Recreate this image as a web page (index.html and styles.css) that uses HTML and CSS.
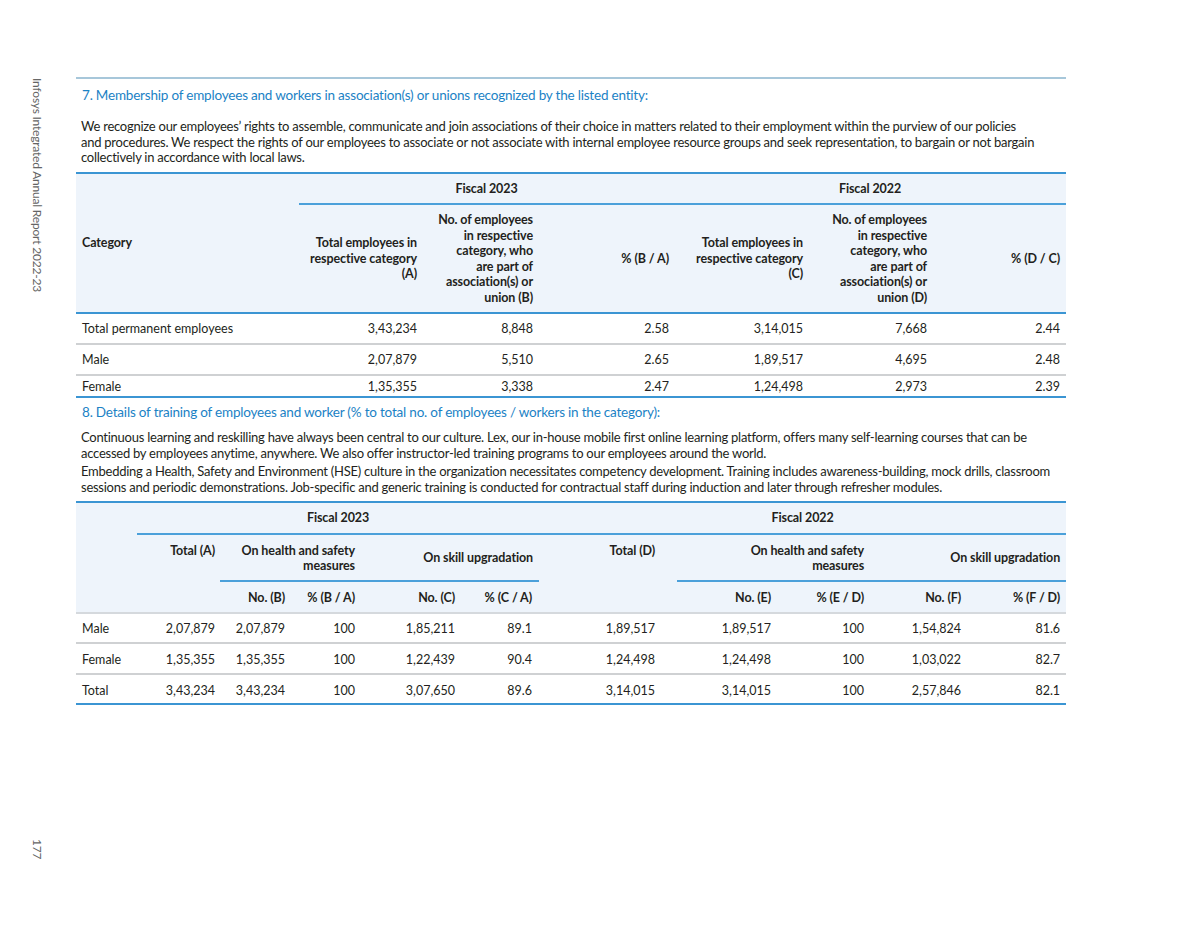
FILE: index.html
```html
<!DOCTYPE html>
<html lang="en">
<head>
<meta charset="utf-8">
<title>Infosys Integrated Annual Report 2022-23 — 177</title>
<link rel="stylesheet" href="styles.css">
</head>
<body>
<div class="page">
  <aside class="side">
    <span class="side-title">Infosys Integrated Annual Report 2022-23</span>
    <span class="side-num">177</span>
  </aside>
  <main class="main">
    <div class="rule"></div>
    <h2 class="sec-title t7">7. Membership of employees and workers in association(s) or unions recognized by the listed entity:</h2>
    <p class="para p-a">We recognize our employees’ rights to assemble, communicate and join associations of their choice in matters related to their employment within the purview of our policies<br>and procedures. We respect the rights of our employees to associate or not associate with internal employee resource groups and seek representation, to bargain or not bargain<br>collectively in accordance with local laws.</p>

    <table class="tbl t1">
      <colgroup>
        <col class="c1-cat"><col class="c1-a"><col class="c1-b"><col class="c1-ba"><col class="c1-c"><col class="c1-d"><col class="c1-dc">
      </colgroup>
      <thead>
        <tr>
          <th rowspan="2" class="cat">Category</th>
          <th colspan="3" class="fiscal">Fiscal 2023</th>
          <th colspan="3" class="fiscal">Fiscal 2022</th>
        </tr>
        <tr class="sub">
          <th>Total employees in<br>respective category<br>(A)</th>
          <th>No. of employees<br>in respective<br>category, who<br>are part of<br>association(s) or<br>union (B)</th>
          <th>% (B / A)</th>
          <th>Total employees in<br>respective category<br>(C)</th>
          <th>No. of employees<br>in respective<br>category, who<br>are part of<br>association(s) or<br>union (D)</th>
          <th>% (D / C)</th>
        </tr>
      </thead>
      <tbody>
        <tr>
          <td class="lbl">Total permanent employees</td>
          <td>3,43,234</td><td>8,848</td><td>2.58</td><td>3,14,015</td><td>7,668</td><td>2.44</td>
        </tr>
        <tr>
          <td class="lbl">Male</td>
          <td>2,07,879</td><td>5,510</td><td>2.65</td><td>1,89,517</td><td>4,695</td><td>2.48</td>
        </tr>
        <tr class="short">
          <td class="lbl">Female</td>
          <td>1,35,355</td><td>3,338</td><td>2.47</td><td>1,24,498</td><td>2,973</td><td>2.39</td>
        </tr>
      </tbody>
    </table>

    <h2 class="sec-title t8">8. Details of training of employees and worker (% to total no. of employees / workers in the category):</h2>
    <p class="para p-b">Continuous learning and reskilling have always been central to our culture. Lex, our in-house mobile first online learning platform, offers many self-learning courses that can be<br>accessed by employees anytime, anywhere. We also offer instructor-led training programs to our employees around the world.</p>
    <p class="para p-c">Embedding a Health, Safety and Environment (HSE) culture in the organization necessitates competency development. Training includes awareness-building, mock drills, classroom<br>sessions and periodic demonstrations. Job-specific and generic training is conducted for contractual staff during induction and later through refresher modules.</p>

    <table class="tbl t2">
      <colgroup>
        <col class="c2-lbl"><col class="c2-a"><col class="c2-b"><col class="c2-ba"><col class="c2-c"><col class="c2-ca"><col class="c2-d"><col class="c2-e"><col class="c2-ed"><col class="c2-f"><col class="c2-fd">
      </colgroup>
      <thead>
        <tr>
          <th rowspan="3" class="blank"></th>
          <th colspan="5" class="fiscal">Fiscal 2023</th>
          <th colspan="5" class="fiscal">Fiscal 2022</th>
        </tr>
        <tr class="grp-row">
          <th rowspan="2" class="top">Total (A)</th>
          <th colspan="2" class="grp">On health and safety<br>measures</th>
          <th colspan="2" class="grp mid">On skill upgradation</th>
          <th rowspan="2" class="top tot-d">Total (D)</th>
          <th colspan="2" class="grp">On health and safety<br>measures</th>
          <th colspan="2" class="grp mid">On skill upgradation</th>
        </tr>
        <tr class="unit-row">
          <th>No. (B)</th><th>% (B / A)</th><th>No. (C)</th><th>% (C / A)</th>
          <th>No. (E)</th><th>% (E / D)</th><th>No. (F)</th><th>% (F / D)</th>
        </tr>
      </thead>
      <tbody>
        <tr>
          <td class="lbl">Male</td>
          <td>2,07,879</td><td>2,07,879</td><td>100</td><td>1,85,211</td><td>89.1</td>
          <td class="tot-d">1,89,517</td><td>1,89,517</td><td>100</td><td>1,54,824</td><td>81.6</td>
        </tr>
        <tr>
          <td class="lbl">Female</td>
          <td>1,35,355</td><td>1,35,355</td><td>100</td><td>1,22,439</td><td>90.4</td>
          <td class="tot-d">1,24,498</td><td>1,24,498</td><td>100</td><td>1,03,022</td><td>82.7</td>
        </tr>
        <tr class="last">
          <td class="lbl">Total</td>
          <td>3,43,234</td><td>3,43,234</td><td>100</td><td>3,07,650</td><td>89.6</td>
          <td class="tot-d">3,14,015</td><td>3,14,015</td><td>100</td><td>2,57,846</td><td>82.1</td>
        </tr>
      </tbody>
    </table>
  </main>
</div>
</body>
</html>
```

FILE: styles.css
```css
* { box-sizing: border-box; }

html, body {
  margin: 0;
  padding: 0;
  background: #ffffff;
}

body {
  font-family: "Lato", "Liberation Sans", sans-serif;
  color: #231f20;
  font-size: 12.5px;
}

.page {
  display: flex;
  width: 1200px;
  height: 927px;
}

/* vertical running header */
.side {
  width: 76px;
  flex: none;
  display: flex;
  flex-direction: column;
  justify-content: space-between;
  align-items: flex-start;
  padding: 78px 0 68px 30px;
}

.side-title,
.side-num {
  writing-mode: vertical-rl;
  font-size: 12px;
  line-height: 14px;
  color: #646464;
  letter-spacing: -0.2px;
}

.main {
  width: 990px;
  flex: none;
  padding-top: 77px;
}

.rule {
  height: 2px;
  background: #a7c7da;
}

.sec-title {
  margin: 0;
  font-weight: 400;
  font-size: 13.5px;
  line-height: 18px;
  color: #1b82c5;
  padding-left: 6px;
  white-space: nowrap;
  letter-spacing: -0.2px;
}

.t7 { margin-top: 7px; }
.t8 { margin-top: 5px; }

.para {
  margin: 0;
  padding-left: 5px;
  font-size: 13px;
  line-height: 15.5px;
  white-space: nowrap;
  letter-spacing: -0.25px;
}

.p-a { margin-top: 15px; }
.p-b { margin-top: 9px; }
.p-c { margin-top: 3px; }

/* tables */
.tbl {
  width: 990px;
  table-layout: fixed;
  border-collapse: collapse;
  border-top: 2px solid #3b95d3;
  border-bottom: 2px solid #3b95d3;
}

.tbl th,
.tbl td {
  padding: 0 5px 0 0;
  text-align: right;
  white-space: nowrap;
  line-height: 15.5px;
}

.tbl td { line-height: 15px; }

.tbl thead th {
  background: #eef4fb;
  font-weight: 700;
  letter-spacing: -0.1px;
}

.tbl .fiscal {
  text-align: center;
  padding: 7px 0 7px 0;
  border-bottom: 2px solid #4ba0da;
}

.tbl td.lbl,
.tbl th.cat {
  text-align: left;
  padding-left: 6px;
}

/* table 1 */
.t1 { margin-top: 6px; }

.c1-cat { width: 223px; }
.c1-a { width: 123px; }
.c1-b { width: 116px; }
.c1-ba { width: 136px; }
.c1-c { width: 134px; }
.c1-d { width: 124px; }
.c1-dc { width: 134px; }

.t1 thead { border-bottom: 2px solid #3b95d3; }

.t1 .sub th {
  padding-top: 7px;
  padding-bottom: 7px;
  vertical-align: middle;
}

.t1 .sub th:last-child { padding-right: 6px; }

.t1 th.cat { vertical-align: middle; }

.t1 tbody td {
  padding-top: 7px;
  padding-bottom: 7px;
}

.t1 tbody td:last-child { padding-right: 6px; }

.t1 tbody tr + tr { border-top: 2px solid #cfd1d3; }

.t1 tbody tr.short td {
  padding-top: 3px;
  padding-bottom: 2px;
}

/* table 2 */
.t2 { margin-top: 6px; }

.c2-lbl { width: 61px; }
.c2-a { width: 83px; }
.c2-b { width: 70px; }
.c2-ba { width: 70px; }
.c2-c { width: 100px; }
.c2-ca { width: 79px; }
.c2-d { width: 138px; }
.c2-e { width: 99px; }
.c2-ed { width: 93px; }
.c2-f { width: 97px; }
.c2-fd { width: 100px; }

.t2 thead { border-bottom: 2px solid #d5d9dd; }

.t2 .grp-row th {
  padding-top: 8px;
  padding-bottom: 6px;
  vertical-align: middle;
}

.t2 .grp-row th.top { vertical-align: top; }

.t2 .grp { border-bottom: 2px solid #4ba0da; }
.t2 .grp.mid { padding-right: 6px; }

.t2 .unit-row th {
  padding-top: 8px;
  padding-bottom: 7px;
}

.t2 th.tot-d,
.t2 td.tot-d { padding-right: 22px; }

.t2 .unit-row th:nth-child(4) { padding-right: 7px; }
.t2 tbody td:nth-child(6) { padding-right: 7px; }
.t2 .unit-row th:last-child,
.t2 tbody td:last-child { padding-right: 6px; }

.t2 tbody td {
  padding-top: 8px;
  padding-bottom: 6px;
}

.t2 tbody tr:first-child td { padding-top: 7px; }

.t2 tbody tr + tr { border-top: 2px solid #cfd1d3; }

.t2 tbody tr.last td { padding-bottom: 5px; }
```
